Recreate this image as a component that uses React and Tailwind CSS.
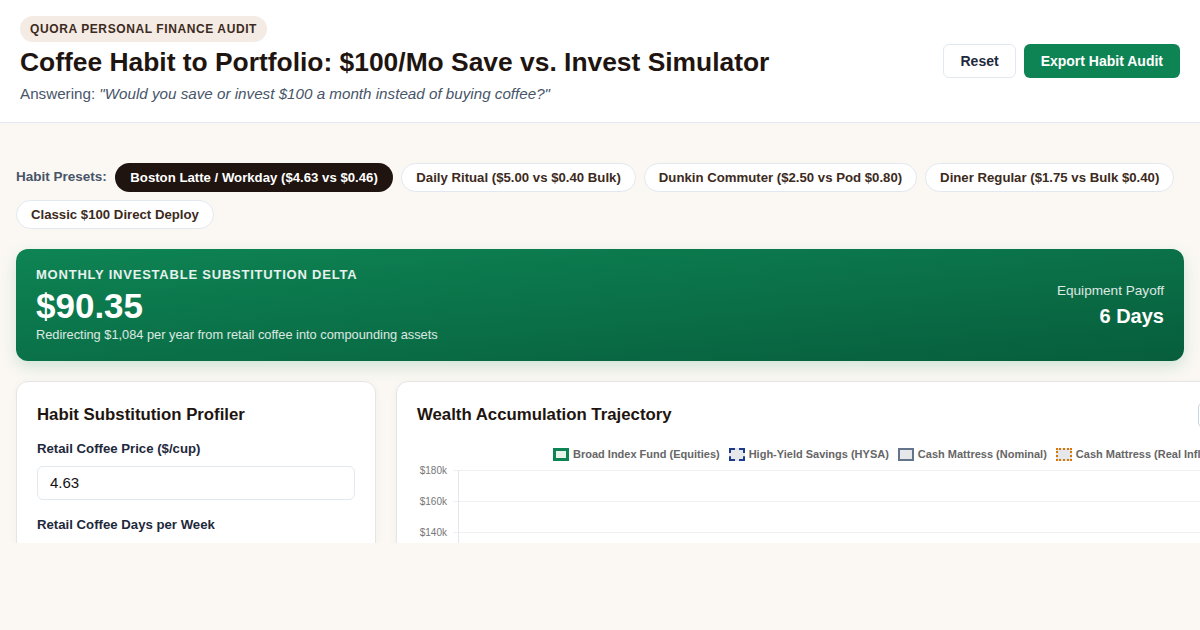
import React from "react";

const presets = [
  { label: "Boston Latte / Workday ($4.63 vs $0.46)", active: true },
  { label: "Daily Ritual ($5.00 vs $0.40 Bulk)" },
  { label: "Dunkin Commuter ($2.50 vs Pod $0.80)" },
  { label: "Diner Regular ($1.75 vs Bulk $0.40)" },
  { label: "Classic $100 Direct Deploy" },
];

const legend = [
  { label: "Broad Index Fund (Equities)", box: "border-[3px] border-solid border-[#0e8454] bg-[#e6f4ec]" },
  { label: "High-Yield Savings (HYSA)", box: "border-[2px] border-dashed border-[#1e3a8a] bg-[#e5e7eb]" },
  { label: "Cash Mattress (Nominal)", box: "border-[2px] border-solid border-[#64748b] bg-[#e5e7eb]" },
  { label: "Cash Mattress (Real Inflation-Adjusted)", box: "border-[2px] border-dotted border-[#d97706] bg-[#e5e7eb]" },
];

const ticks = ["$180k", "$160k", "$140k", "$120k", "$100k"];

function Chart() {
  return (
    <svg width="860" height="120" className="block">
      {ticks.map((t, i) => (
        <g key={t}>
          <text
            x="30"
            y={i * 31 + 11.5}
            textAnchor="end"
            fontSize="10"
            fill="#777"
            fontFamily="'Liberation Sans', Arial, sans-serif"
          >
            {t}
          </text>
          <line x1="36" x2="860" y1={i * 31 + 8.5} y2={i * 31 + 8.5} stroke="#eef0f4" strokeWidth="1" />
        </g>
      ))}
      <line x1="41.5" x2="41.5" y1="8" y2="120" stroke="#e3e6eb" strokeWidth="1" />
    </svg>
  );
}

export default function App() {
  return (
    <div className="min-h-screen bg-[#fbf8f3] font-['Liberation_Sans',Arial,sans-serif]">
      <div className="h-[543px] overflow-hidden">
        <header className="bg-white border-b border-[#e2e8f0] px-5 pt-4 pb-[18px] flex items-center justify-between">
          <div>
            <span className="inline-block rounded-full bg-[#f3ebe4] px-2.5 py-[5px] text-[12px] leading-4 font-bold tracking-[0.05em] text-[#3d2a20]">
              QUORA PERSONAL FINANCE AUDIT
            </span>
            <h1 className="mt-1 text-[26.4px] leading-8 font-bold text-[#1f1510]">
              Coffee Habit to Portfolio: $100/Mo Save vs. Invest Simulator
            </h1>
            <p className="mt-1.5 text-[15.2px] leading-5 text-[#475569]">
              Answering: <em>"Would you save or invest $100 a month instead of buying coffee?"</em>
            </p>
          </div>
          <div className="flex gap-2 mt-[2px]">
            <button className="h-[34px] px-4 rounded-md border border-[#e2e8f0] bg-white text-[14px] font-bold text-[#1e293b]">
              Reset
            </button>
            <button className="h-[34px] px-[17px] rounded-md bg-[#0e8454] text-[14px] font-bold text-white">
              Export Habit Audit
            </button>
          </div>
        </header>

        <main className="px-4 pt-10">
          <div className="flex flex-wrap items-center gap-2">
            <span className="text-[13.5px] font-bold text-[#475569]">Habit Presets:</span>
            {presets.map((p) => (
              <button
                key={p.label}
                className={
                  p.active
                    ? "h-[29px] px-[15.5px] rounded-full bg-[#1f1410] text-white text-[13.2px] font-bold"
                    : "h-[29px] px-[14px] rounded-full border border-[#e2e8f0] bg-white text-[#3d2a20] text-[13.2px] font-bold"
                }
              >
                {p.label}
              </button>
            ))}
          </div>

          <section className="mt-5 rounded-xl bg-gradient-to-br from-[#0e8454] to-[#075e3c] px-5 py-[18px] flex items-center justify-between text-white shadow-[0_6px_16px_rgba(14,132,84,0.18)]">
            <div>
              <div className="text-[13px] leading-4 font-bold tracking-[0.06em] text-white/90">
                MONTHLY INVESTABLE SUBSTITUTION DELTA
              </div>
              <div className="mt-[3px] text-[35px] leading-[40px] font-bold">$90.35</div>
              <div className="text-[12.8px] leading-[17px] text-white/85">
                Redirecting $1,084 per year from retail coffee into compounding assets
              </div>
            </div>
            <div className="text-right">
              <div className="text-[13.6px] leading-4 text-white/85">Equipment Payoff</div>
              <div className="mt-[5px] text-[20px] leading-6 font-bold">6 Days</div>
            </div>
          </section>

          <div className="mt-5 flex gap-5">
            <div className="w-[360px] shrink-0 rounded-xl border border-[#e7e5e4] bg-white p-5 shadow-[0_2px_8px_rgba(0,0,0,0.04)]">
              <h2 className="mt-px text-[16.8px] leading-6 font-bold text-[#1f1510]">Habit Substitution Profiler</h2>
              <label className="mt-[14px] block text-[13.2px] leading-4 font-bold text-[#1e293b]">
                Retail Coffee Price ($/cup)
              </label>
              <div className="mt-[9px] h-[34px] rounded-md border border-[#e2e8f0] px-3 flex items-center text-[15px] text-[#111]">
                4.63
              </div>
              <label className="mt-[17px] block text-[13.2px] leading-4 font-bold text-[#1e293b]">
                Retail Coffee Days per Week
              </label>
              <div className="mt-[22px] h-[34px]" />
            </div>

            <div className="w-[903px] shrink-0 rounded-xl border border-[#e7e5e4] bg-white p-5 shadow-[0_2px_8px_rgba(0,0,0,0.04)]">
              <div className="flex items-center justify-between">
                <h2 className="mt-px text-[16.8px] leading-6 font-bold text-[#1f1510]">Wealth Accumulation Trajectory</h2>
                <div className="w-[80px] h-[24px] rounded border border-[#cbd5e1] text-[12px] text-[#64748b] flex items-center px-2">
                  10 Years
                </div>
              </div>
              <div className="mt-5 ml-[136px] flex items-center gap-[9px] text-[11px] leading-[14px] font-bold text-[#666] whitespace-nowrap">
                {legend.map((l) => (
                  <div key={l.label} className="flex items-center gap-[4px]">
                    <span className={"inline-block w-[16px] h-[13px] " + l.box} />
                    <span>{l.label}</span>
                  </div>
                ))}
              </div>
              <div className="mt-px">
                <Chart />
              </div>
            </div>
          </div>
        </main>
      </div>
    </div>
  );
}
